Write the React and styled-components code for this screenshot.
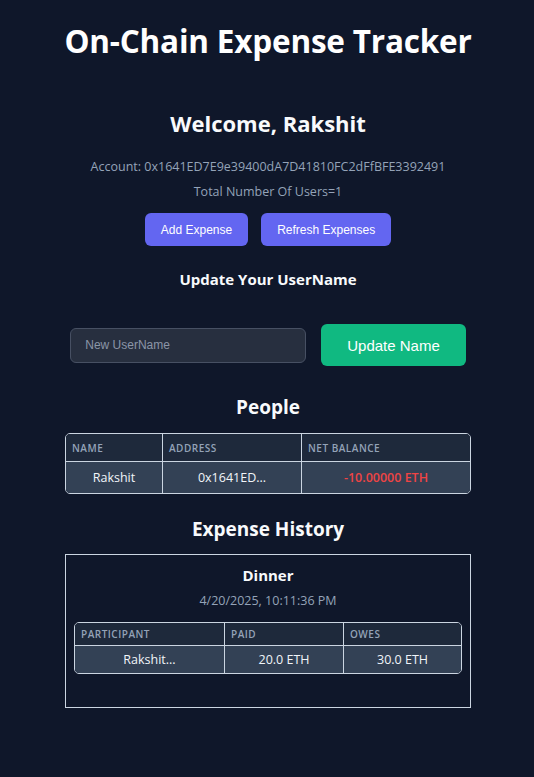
import React, { useState } from 'react'
import styled, { createGlobalStyle } from 'styled-components'

const GlobalStyle = createGlobalStyle`
  html, body {
    margin: 0;
    padding: 0;
    background: #0f172a;
  }
  body {
    font-family: "Open Sans", "Noto Sans", sans-serif;
    color: #f1f5f9;
    min-height: 777px;
  }
`

const Page = styled.div`
  display: flex;
  flex-direction: column;
  align-items: center;
  padding: 19px 0 0 2px;
`

const Title = styled.h1`
  margin: 0;
  font-size: 31.5px;
  font-weight: 700;
  color: #ffffff;
  letter-spacing: -0.2px;
`

const Welcome = styled.h2`
  margin: 46px 0 0;
  font-size: 22px;
  font-weight: 700;
  color: #f8fafc;
`

const Info = styled.p`
  margin: ${p => p.$top || 0}px 0 0;
  font-size: 12.5px;
  color: #94a3b8;
`

const ButtonRow = styled.div`
  display: flex;
  gap: 13px;
  margin-top: 13px;
`

const Button = styled.button`
  border: none;
  border-radius: 6px;
  font-family: "Liberation Sans", Arial, sans-serif;
  color: #ffffff;
  cursor: pointer;
  background: ${p => (p.$green ? '#10b981' : '#6366f1')};
  font-size: ${p => (p.$big ? 15 : 12)}px;
  height: ${p => (p.$big ? 42 : 33)}px;
  padding: 0 ${p => (p.$big ? 26 : 16)}px;
`

const Section = styled.h3`
  margin: ${p => p.$top}px 0 0;
  font-size: ${p => p.$size}px;
  font-weight: 700;
  color: #f8fafc;
`

const Form = styled.div`
  display: flex;
  align-items: center;
  gap: 15px;
  margin-top: 35px;
`

const Input = styled.input`
  width: 236px;
  height: 35px;
  box-sizing: border-box;
  background: #272f3f;
  border: 1px solid #475063;
  border-radius: 6px;
  padding: 0 14px;
  color: #e2e8f0;
  font-family: "Liberation Sans", Arial, sans-serif;
  font-size: 12px;
  outline: none;

  &::placeholder {
    color: #8b95a7;
  }
`

const Table = styled.div`
  display: grid;
  grid-template-columns: ${p => p.$cols};
  width: ${p => p.$width}px;
  margin-top: ${p => p.$top}px;
  border: 1px solid #cbd5e1;
  border-radius: 5px;
  overflow: hidden;
  box-sizing: border-box;
`

const Head = styled.div`
  background: #1e293b;
  color: #94a3b8;
  font-size: 10px;
  font-weight: 600;
  letter-spacing: 0.5px;
  text-transform: uppercase;
  height: ${p => p.$h}px;
  display: flex;
  align-items: center;
  padding: 0 6px;
  border-left: ${p => (p.$first ? 'none' : '1px solid #cbd5e1')};
  border-bottom: 1px solid #cbd5e1;
`

const Cell = styled.div`
  background: #334155;
  color: ${p => (p.$neg ? '#ef4444' : '#f1f5f9')};
  font-weight: ${p => (p.$neg ? 600 : 400)};
  font-size: 12.5px;
  height: ${p => p.$h}px;
  display: flex;
  align-items: center;
  justify-content: center;
  border-left: ${p => (p.$first ? 'none' : '1px solid #cbd5e1')};
`

const Card = styled.div`
  width: 406px;
  height: 154px;
  box-sizing: border-box;
  margin-top: 12px;
  border: 1px solid #cbd5e1;
  display: flex;
  flex-direction: column;
  align-items: center;
  padding-top: 10px;
`

const CardTitle = styled.div`
  font-size: 15px;
  font-weight: 700;
  color: #f8fafc;
`

const CardDate = styled.div`
  margin-top: 7px;
  font-size: 12.5px;
  color: #94a3b8;
`

function DataTable({ cols, width, top, heads, cells, headH, rowH }) {
  return (
    <Table $cols={cols} $width={width} $top={top}>
      {heads.map((h, i) => (
        <Head key={h} $first={i === 0} $h={headH}>{h}</Head>
      ))}
      {cells.map((c, i) => (
        <Cell key={i} $first={i === 0} $h={rowH} $neg={c.neg}>{c.text}</Cell>
      ))}
    </Table>
  )
}

function App() {
  const [name, setName] = useState('')

  return (
    <Page>
      <GlobalStyle />
      <Title>On-Chain Expense Tracker</Title>
      <Welcome>Welcome, Rakshit</Welcome>
      <Info $top={20}>Account: 0x1641ED7E9e39400dA7D41810FC2dFfBFE3392491</Info>
      <Info $top={8}>Total Number Of Users=1</Info>
      <ButtonRow>
        <Button>Add Expense</Button>
        <Button>Refresh Expenses</Button>
      </ButtonRow>
      <Section $top={23} $size={15}>Update Your UserName</Section>
      <Form>
        <Input placeholder="New UserName" value={name} onChange={e => setName(e.target.value)} />
        <Button $green $big>Update Name</Button>
      </Form>
      <Section $top={28} $size={19}>People</Section>
      <DataTable
        cols="96px 139px 1fr"
        width={406}
        top={13}
        headH={27}
        rowH={31}
        heads={['Name', 'Address', 'Net Balance']}
        cells={[{ text: 'Rakshit' }, { text: '0x1641ED...' }, { text: '-10.00000 ETH', neg: true }]}
      />
      <Section $top={22} $size={19}>Expense History</Section>
      <Card>
        <CardTitle>Dinner</CardTitle>
        <CardDate>4/20/2025, 10:11:36 PM</CardDate>
        <DataTable
          cols="149px 119px 1fr"
          width={388}
          top={13}
          headH={22}
          rowH={27}
          heads={['Participant', 'Paid', 'Owes']}
          cells={[{ text: 'Rakshit...' }, { text: '20.0 ETH' }, { text: '30.0 ETH' }]}
        />
      </Card>
    </Page>
  )
}

export default App
